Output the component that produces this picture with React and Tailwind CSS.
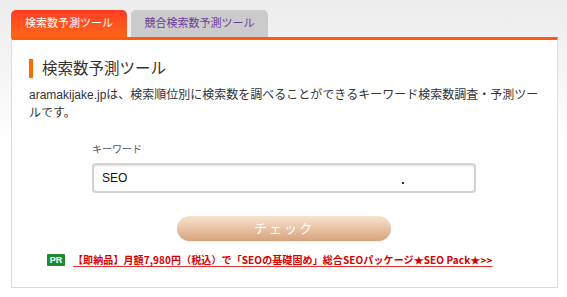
export default function App() {
  const jp = { fontFamily: '"Liberation Sans", "Noto Sans CJK JP", sans-serif' };
  return (
    <div
      className="w-[567px] h-[297px] overflow-hidden bg-gradient-to-b from-[#ececec] via-[#ffffff] to-[#ffffff] pt-[10px] pl-[11px]"
      style={jp}
    >
      <div className="flex gap-[4px] h-[27px]">
        <div className="w-[116px] h-[27px] rounded-t-[5px] bg-gradient-to-b from-[#ff3a24] to-[#ff651a] text-white text-[11px] flex items-center justify-center">
          検索数予測ツール
        </div>
        <div className="w-[137px] h-[27px] rounded-t-[5px] bg-[#cbcbcb] text-[#6b3d9c] text-[11px] flex items-center justify-center">
          競合検索数予測ツール
        </div>
      </div>
      <div className="w-[547px] h-[251px] bg-white border-t-[3px] border-t-[#ff5a12] border-x border-b border-x-[#dcdcdc] border-b-[#dcdcdc] pt-[19px] pl-[17px] pr-[17px]">
        <div className="flex items-center h-[19px] gap-[9px]">
          <div className="w-[4px] h-[19px] bg-[#ff6a00]" />
          <div className="text-[15.5px] leading-[19px] text-[#333333]">検索数予測ツール</div>
        </div>
        <p className="mt-[8px] text-[12px] leading-[18px] text-[#333333]">
          aramakijake.jpは、検索順位別に検索数を調べることができるキーワード検索数調査・予測ツールです。
        </p>
        <div className="ml-[63px] w-[384px]">
          <div className="mt-[21px] text-[10px] leading-[14px] text-[#555555]">キーワード</div>
          <div className="relative mt-[6px] h-[30px] rounded-[4px] border-2 border-[#d3d3d3] bg-white shadow-[inset_0_1px_2px_rgba(0,0,0,0.12)] flex items-center pl-[8px]">
            <span className="text-[12px] text-[#111111]">SEO</span>
            <span className="absolute left-[308px] top-[17px] w-[2px] h-[2px] bg-[#333333]" />
          </div>
          <div className="mt-[23px] flex justify-center">
            <div className="w-[214px] h-[25px] rounded-full bg-gradient-to-b from-[#f8e3cf] to-[#d7a37b] shadow-[0_1px_1px_rgba(0,0,0,0.08)] flex items-center justify-center text-white text-[13px] tracking-[2px]">
              チェック
            </div>
          </div>
        </div>
        <div className="mt-[12px] ml-[18px] flex items-center gap-[8px]">
          <span className="w-[18px] h-[12px] bg-[#1f8a2e] text-white text-[9px] font-bold leading-[12px] flex items-center justify-center rounded-[1px]" style={{ fontFamily: '"Liberation Sans", sans-serif' }}>
            PR
          </span>
          <span
            className="text-[10px] font-bold text-[#d40000] underline decoration-[#e03030] underline-offset-[2px] leading-[14px] tracking-[0.1px]"
            style={{ fontFamily: '"Noto Sans CJK JP", sans-serif' }}
          >
            【即納品】月額7,980円（税込）で「SEOの基礎固め」総合SEOパッケージ★SEO Pack★&gt;&gt;
          </span>
        </div>
      </div>
    </div>
  );
}
